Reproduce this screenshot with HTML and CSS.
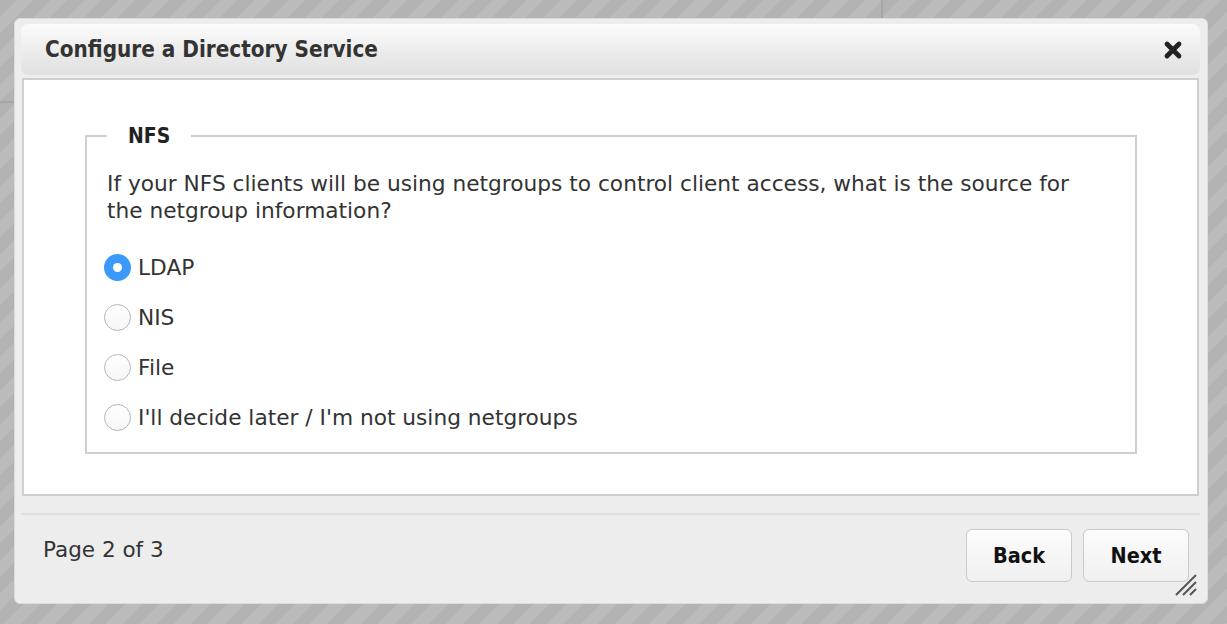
FILE: index.html
```html
<!DOCTYPE html>
<html>
<head>
<meta charset="utf-8">
<link rel="stylesheet" href="styles.css">
</head>
<body>
<div class="backdrop">
  <div class="bg-vline"></div>
  <div class="bg-hline"></div>
</div>
<div class="dialog">
  <div class="header">
    <h1 class="title">Configure a Directory Service</h1>
    <button class="close" aria-label="Close">
      <svg width="20" height="20" viewBox="0 0 20 20"><path d="M4 4 L16 16 M16 4 L4 16" stroke="#222" stroke-width="4.8" stroke-linecap="round"/></svg>
    </button>
  </div>
  <div class="content">
    <fieldset class="group">
      <legend class="legend">NFS</legend>
      <p class="question">If your NFS clients will be using netgroups to control client access, what is the source for the netgroup information?</p>
      <div class="options">
        <label class="option"><span class="radio checked"></span><span>LDAP</span></label>
        <label class="option"><span class="radio"></span><span>NIS</span></label>
        <label class="option"><span class="radio"></span><span>File</span></label>
        <label class="option"><span class="radio"></span><span>I'll decide later / I'm not using netgroups</span></label>
      </div>
    </fieldset>
  </div>
  <div class="footer">
    <div class="page">Page 2 of 3</div>
    <div class="buttons">
      <button class="btn">Back</button>
      <button class="btn">Next</button>
    </div>
    <svg class="grip" width="24" height="24" viewBox="0 0 24 24"><path d="M2 22 L22 2 M9 22 L22 9 M16 22 L22 16" stroke="#555" stroke-width="2"/></svg>
  </div>
</div>
</body>
</html>
```
FILE: styles.css
```css
html, body {
  margin: 0;
  padding: 0;
  width: 1227px;
  height: 624px;
  overflow: hidden;
}
body {
  font-family: "DejaVu Sans", sans-serif;
  color: #333;
  background: repeating-linear-gradient(135deg, #b3b3b3 0px, #b3b3b3 12px, #bbbbbb 12px, #bbbbbb 24px);
  position: relative;
}
.backdrop {
  position: absolute;
  inset: 0;
}
.bg-vline {
  position: absolute;
  left: 881px;
  top: 0;
  width: 2px;
  height: 20px;
  background: #a5a5a5;
}
.bg-hline {
  position: absolute;
  left: 0;
  top: 101px;
  width: 16px;
  height: 2px;
  background: #a5a5a5;
}
.dialog {
  position: absolute;
  left: 14px;
  top: 18px;
  width: 1194px;
  height: 586px;
  box-sizing: border-box;
  background: #ededed;
  border: 1px solid #dcdcdc;
  border-radius: 6px;
  padding: 5px 7px 0 6px;
  display: flex;
  flex-direction: column;
}
.header {
  height: 51px;
  flex: none;
  box-sizing: border-box;
  border-radius: 7px;
  background: linear-gradient(#fbfbfb, #e0e0e0);
  display: flex;
  align-items: center;
  justify-content: space-between;
  padding: 0 15px 0 24px;
}
.title {
  margin: 0 0 2px 0;
  font-family: "DejaVu Sans Condensed", "DejaVu Sans", sans-serif;
  font-size: 22.3px;
  font-weight: bold;
  color: #333;
}
.close {
  border: 0;
  background: none;
  padding: 0;
  width: 24px;
  height: 24px;
  display: flex;
  align-items: center;
  justify-content: center;
}
.content {
  margin: 3px 1px 0 1px;
  height: 418px;
  flex: none;
  box-sizing: border-box;
  background: #fff;
  border: 2px solid #cfcfcf;
  padding: 44px 60px 0 61px;
}
.group {
  margin: 0;
  border: 2px solid #cfcfcf;
  padding: 0 40px 0 20px;
  height: 330px;
  box-sizing: border-box;
}
.legend {
  font-family: "DejaVu Sans Condensed", "DejaVu Sans", sans-serif;
  font-weight: bold;
  font-size: 21px;
  color: #222;
  padding: 0 21px;
  margin-left: 0;
}
.question {
  margin: 22px 0 0 0;
  font-size: 21.7px;
  line-height: 27px;
  color: #333;
}
.options {
  margin-top: 29px;
  display: flex;
  flex-direction: column;
  gap: 22px;
}
.option {
  display: flex;
  align-items: center;
  gap: 7px;
  height: 28px;
  font-size: 21.7px;
  color: #333;
  margin-left: -3px;
}
.radio {
  width: 27px;
  height: 27px;
  box-sizing: border-box;
  border-radius: 50%;
  border: 1px solid #b5b5b5;
  background: linear-gradient(#fff, #f6f6f6);
  flex: none;
  display: flex;
  align-items: center;
  justify-content: center;
}
.radio.checked {
  border: 0;
  background: #3b99fc;
}
.radio.checked::after {
  content: "";
  width: 9px;
  height: 9px;
  border-radius: 50%;
  background: #fff;
}
.footer {
  margin-top: 17px;
  border-top: 2px solid #dedede;
  flex: 1;
  display: flex;
  align-items: center;
  justify-content: space-between;
  padding: 0 11px 0 22px;
  position: relative;
}
.page {
  font-size: 21.5px;
  color: #333;
  margin-top: -19px;
}
.buttons {
  display: flex;
  gap: 11px;
  margin-top: -8px;
}
.btn {
  width: 106px;
  height: 53px;
  box-sizing: border-box;
  border: 1.5px solid #cacaca;
  border-radius: 6px;
  background: linear-gradient(#fcfcfc, #f0f0f0);
  font-family: "DejaVu Sans Condensed", "DejaVu Sans", sans-serif;
  font-weight: bold;
  font-size: 21.5px;
  color: #111;
}
.grip {
  position: absolute;
  right: 2px;
  bottom: 6px;
}
```
